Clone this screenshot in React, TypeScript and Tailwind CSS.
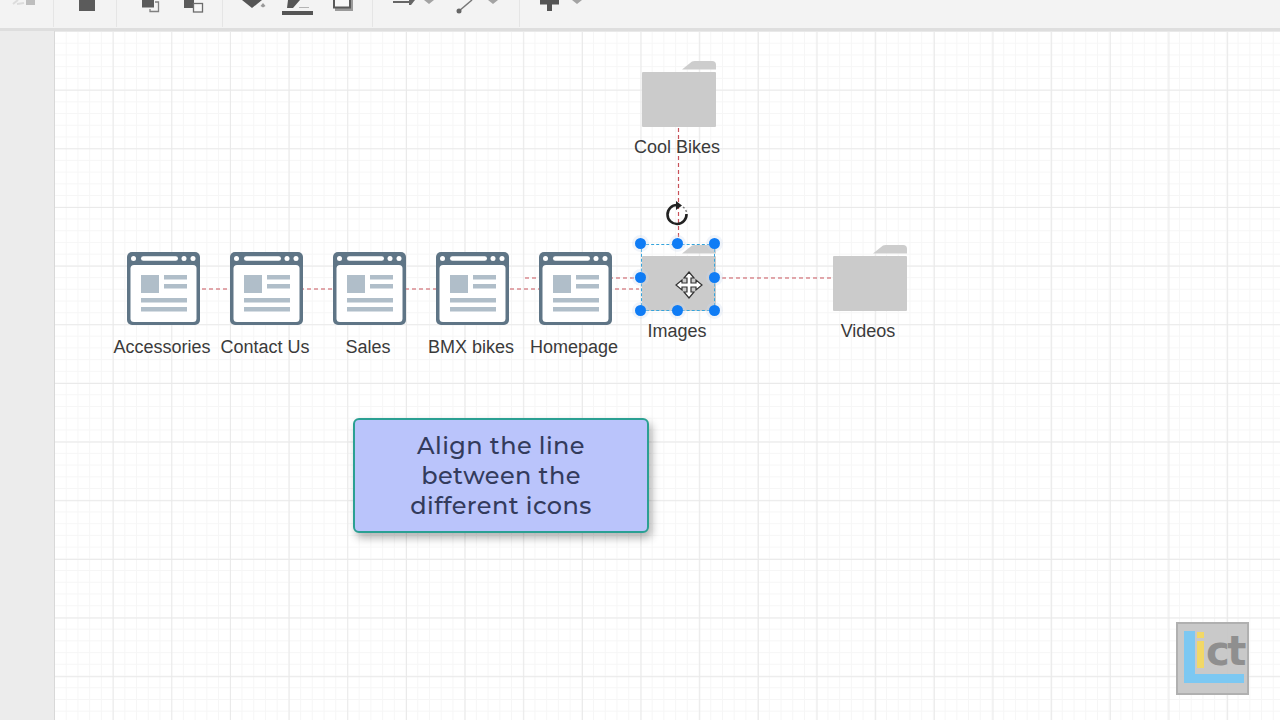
import type { ReactNode } from 'react';

const GRID =
  'bg-white bg-[linear-gradient(to_right,#e9e9e9_1px,transparent_1px),linear-gradient(to_bottom,#e9e9e9_1px,transparent_1px),linear-gradient(to_right,#f6f6f6_1px,transparent_1px),linear-gradient(to_bottom,#f6f6f6_1px,transparent_1px)] bg-[size:58.67px_58.67px,58.67px_58.67px,11.73px_11.73px,11.73px_11.73px] bg-[position:-1px_0px,-1px_0px,-1px_0px,-1px_0px]';

function PageIcon() {
  return (
    <svg width="75" height="75" viewBox="0 0 75 75">
      <rect x="1" y="1" width="73" height="73" rx="5" fill="#5f7586" />
      <rect x="4.500" y="14" width="66" height="57" rx="3.500" fill="#fff" />
      <circle cx="7.500" cy="7.500" r="2.500" fill="#fff" />
      <rect x="15" y="5.200" width="37" height="4.600" rx="2.300" fill="#fff" />
      <circle cx="58" cy="7.500" r="2.500" fill="#fff" />
      <circle cx="67" cy="7.500" r="2.500" fill="#fff" />
      <rect x="15" y="24" width="18" height="18" fill="#b0bec9" />
      <rect x="38" y="24" width="23" height="4.500" fill="#b0bec9" />
      <rect x="38" y="33" width="23" height="4.500" fill="#b0bec9" />
      <rect x="15" y="47" width="46" height="4.500" fill="#b0bec9" />
      <rect x="15" y="56" width="46" height="4.500" fill="#b0bec9" />
    </svg>
  );
}

function FolderIcon() {
  return (
    <svg width="76" height="68" viewBox="0 0 76 68">
      <path d="M41 9.500 L51 1.500 Q52 1 54 1 H71 Q75 1 75 5 V9.500 Z" fill="#cdcdcd" />
      <rect x="1" y="12" width="74" height="55" rx="1" fill="#cbcbcb" />
    </svg>
  );
}

function NodeLabel({ children }: { children: ReactNode }) {
  return (
    <div className="whitespace-nowrap font-['Liberation_Sans',sans-serif] text-[18px] leading-5 text-[#3b3b3b]">
      {children}
    </div>
  );
}

function PageNode({ label }: { label: string }) {
  return (
    <div className="flex w-[75px] flex-col items-center gap-[11px]">
      <PageIcon />
      <div className="pr-[3px]">
        <NodeLabel>{label}</NodeLabel>
      </div>
    </div>
  );
}

function FolderNode({ label, className }: { label: string; className: string }) {
  return (
    <div className={`absolute flex w-[76px] flex-col items-center gap-[9px] ${className}`}>
      <FolderIcon />
      <div className="pr-[4px]">
        <NodeLabel>{label}</NodeLabel>
      </div>
    </div>
  );
}

function Handle() {
  return (
    <div className="h-[11px] w-[11px] rounded-full bg-[#0f7cf5] shadow-[0_0_0_3px_rgba(205,220,240,0.3)]" />
  );
}

function HandleRow({ middle = true }: { middle?: boolean }) {
  return (
    <div className="flex justify-between">
      <Handle />
      {middle && <Handle />}
      <Handle />
    </div>
  );
}

function ToolGroup({ from, to, children, last }: { from: number; to: number; children?: ReactNode; last?: boolean }) {
  return (
    <div className={`h-[27px] shrink-0 ${last ? '' : 'border-r border-[#e5e5e5]'}`} style={{ width: to - from }}>
      <svg width={to - from} height="27" viewBox={`${from} 0 ${to - from} 27`}>
        {children}
      </svg>
    </div>
  );
}

function Toolbar() {
  return (
    <div className="flex h-[31px] shrink-0 border-b-[3px] border-[#dedede] bg-[#f3f3f3]">
      <ToolGroup from={0} to={54}>
        <path d="M13 4 L18 0 M17 4 L24 3" stroke="#dcdcdc" strokeWidth="2" />
        <rect x="26" y="0" width="9" height="5" fill="#bdbdbd" />
      </ToolGroup>
      <ToolGroup from={54} to={117}>
        <rect x="79" y="0" width="16" height="11" fill="#5b5b5b" />
      </ToolGroup>
      <ToolGroup from={117} to={223}>
        <rect x="142" y="0" width="12" height="7.500" fill="#5b5b5b" />
        <path d="M155 2 H158.500 V11.500 H150 V9" fill="none" stroke="#808080" strokeWidth="1.300" />
        <rect x="184" y="0" width="10" height="8" fill="#5b5b5b" />
        <rect x="193.500" y="3.500" width="9" height="8.500" fill="#f7f7f7" stroke="#6c6c6c" strokeWidth="1.300" />
      </ToolGroup>
      <ToolGroup from={223} to={373}>
        <path d="M242 0 H262 L252 8 Z" fill="#555" />
        <path d="M263 3 L265.500 6 L263 7.500 L260.500 6 Z" fill="#999" />
        <path d="M288 0 H300 L293 8 H287 Z" fill="#555" />
        <rect x="282" y="11" width="31" height="4" fill="#555" />
        <path d="M299 7.500 H309" stroke="#b4b4b4" strokeWidth="1" />
        <path d="M335 0 V11 H353 V0" fill="#9a9a9a" />
        <path d="M333 0 V8.500 H351 V0" fill="#595959" />
        <rect x="335" y="0" width="14" height="6.500" fill="#f7f7f7" />
      </ToolGroup>
      <ToolGroup from={373} to={520}>
        <rect x="393" y="1" width="18" height="2" fill="#666" />
        <path d="M409 0 H415 L411 5 H409 Z" fill="#666" />
        <path d="M424 0 H434 L429 4 Z" fill="#a3a3a3" />
        <path d="M459 11 L472 0" stroke="#777" strokeWidth="1.500" />
        <circle cx="459" cy="11" r="2.500" fill="#666" />
        <path d="M488 0 H498 L493 4 Z" fill="#a3a3a3" />
      </ToolGroup>
      <ToolGroup from={520} to={760} last>
        <rect x="547" y="0" width="5" height="11" fill="#555" />
        <rect x="540" y="0" width="19" height="4.500" fill="#555" />
        <path d="M572 0 H582 L577 4 Z" fill="#a3a3a3" />
      </ToolGroup>
    </div>
  );
}

export default function App() {
  return (
    <div className="flex h-screen w-screen flex-col overflow-hidden bg-[#ebebeb]">
      <Toolbar />
      <div className="flex min-h-0 flex-1">
        <div className="w-[55px] shrink-0 border-r border-[#d8d8d8] bg-[#ececec]" />
        <div className={`relative flex-1 overflow-hidden ${GRID}`}>
          {/* connectors sit under the nodes */}
          <svg width="1225" height="689" className="absolute left-0 top-0">
            <g fill="none" stroke="#c8525a" strokeWidth="1.200" strokeDasharray="4 3">
              <path d="M147 258 H584" />
              <path d="M470 247 H586" />
              <path d="M660 247 H778" />
              <path d="M623.500 97 V212" />
            </g>
          </svg>

          <div className="absolute left-[71px] top-[220px] flex gap-[28px]">
            <PageNode label="Accessories" />
            <PageNode label="Contact Us" />
            <PageNode label="Sales" />
            <PageNode label="BMX bikes" />
            <PageNode label="Homepage" />
          </div>

          <FolderNode label="Cool Bikes" className="left-[586px] top-[29px]" />
          <FolderNode label="Images" className="left-[586px] top-[213px]" />
          <FolderNode label="Videos" className="left-[777px] top-[213px]" />

          {/* selection around the Images folder */}
          <div className="absolute left-[580px] top-[207px] flex h-[78px] w-[85px] flex-col justify-between">
            <div className="absolute inset-[5.5px] border border-dashed border-[#35a4dc]" />
            <div className="relative flex h-full flex-col justify-between">
              <HandleRow />
              <HandleRow middle={false} />
              <HandleRow />
            </div>
          </div>

          <svg width="26" height="26" viewBox="0 0 26 26" className="absolute left-[609px] top-[170px]">
            <path d="M13 4 A9.500 9.500 0 1 0 22.500 13" fill="none" stroke="#222" strokeWidth="2.600" />
            <path d="M12 0 L18 4.500 L12 9 Z" fill="#222" />
            <path d="M19 6 A9.500 9.500 0 0 1 22.500 11" fill="none" stroke="#777" strokeWidth="1.500" strokeDasharray="2 2" />
          </svg>

          <svg width="30" height="30" viewBox="0 0 30 30" className="absolute left-[619px] top-[239px]">
            <path
              d="M15 2 L20 8 H17 V13 H22 V10 L28 15 L22 20 V17 H17 V22 H20 L15 28 L10 22 H13 V17 H8 V20 L2 15 L8 10 V13 H13 V8 H10 Z"
              fill="#fff"
              stroke="#333"
              strokeWidth="1.200"
            />
          </svg>

          <div className="absolute left-[298px] top-[387px] flex h-[115px] w-[296px] items-center justify-center rounded-[6px] border-2 border-[#2ba093] bg-[#bac4fb] text-center font-['Montserrat','Inter',sans-serif] text-[24px] font-medium leading-[30px] tracking-[0.4px] text-[#333b5c] shadow-[3px_5px_9px_rgba(0,0,0,0.3)]">
            <div>
              Align the line
              <br />
              between the
              <br />
              different icons
            </div>
          </div>

          {/* watermark */}
          <div className="absolute left-[1121px] top-[591px] h-[73px] w-[73px] border-2 border-[#b0b0b0] bg-[#c6c6c6]/95">
            <div className="absolute bottom-[10px] left-[6px] h-[52px] w-[11px] bg-[#7cc8f2]" />
            <div className="absolute bottom-[10px] left-[6px] h-[9px] w-[60px] bg-[#7cc8f2]" />
            <div className="absolute left-[19px] top-[8px] h-[6px] w-[7px] bg-[#f2d866]" />
            <div className="absolute left-[19px] top-[17px] h-[27px] w-[7px] bg-[#f2d866]" />
            <span className="absolute left-[28px] top-[3px] font-['DejaVu_Sans',sans-serif] text-[40px] font-bold leading-[48px] tracking-[-2.500px] text-[#8f8f8f]">
              ct
            </span>
          </div>
        </div>
      </div>
    </div>
  );
}
